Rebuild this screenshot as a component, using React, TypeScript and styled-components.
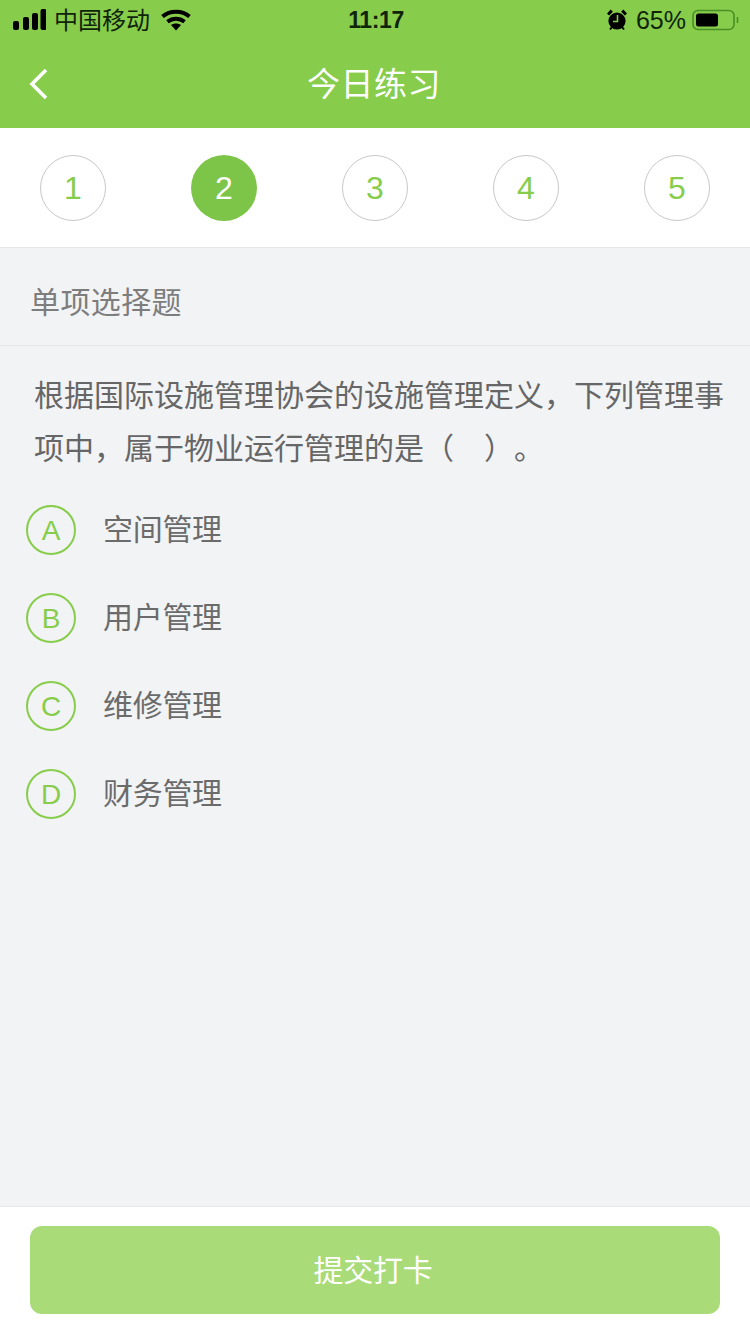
import * as React from "react"
import styled, { createGlobalStyle } from "styled-components"

const GlobalStyle = createGlobalStyle`
  html, body {
    margin: 0;
    padding: 0;
    background: #f2f3f5;
    font-family: "Liberation Sans", "Noto Sans CJK SC", sans-serif;
  }
`

const steps = [1, 2, 3, 4, 5]

const options = [
  { key: "A", label: "空间管理" },
  { key: "B", label: "用户管理" },
  { key: "C", label: "维修管理" },
  { key: "D", label: "财务管理" }
]

const SignalIcon = () => (
  <svg width="33" height="22" viewBox="0 0 33 22">
    <rect x="0" y="12" width="6" height="9" rx="2" fill="#000" />
    <rect x="10" y="8" width="6" height="13" rx="2" fill="#000" />
    <rect x="19" y="4" width="6" height="17" rx="2" fill="#000" />
    <rect x="27.5" y="0" width="6" height="21" rx="2" fill="#000" />
  </svg>
)

const WifiIcon = () => (
  <svg width="30" height="22" viewBox="0 0 30 22">
    <path d="M1.5 7.5C9 1 21 1 28.5 7.5" fill="none" stroke="#000" strokeWidth="4" />
    <path d="M6.5 12.8c5-4 12-4 17 0" fill="none" stroke="#000" strokeWidth="4" />
    <path d="M10 16c3-2 7-2 10 0l-5 5.5z" fill="#000" />
  </svg>
)

const AlarmIcon = () => (
  <svg width="20" height="22" viewBox="0 0 20 22">
    <circle cx="10" cy="12" r="8.6" fill="#000" />
    <path d="M1 5.5 4.8 1.6M19 5.5 15.2 1.6" stroke="#000" strokeWidth="3" />
    <path d="M3 20.5l2-2.5M17 20.5l-2-2.5" stroke="#000" strokeWidth="2" />
    <path d="M10.5 6v6.5H6" fill="none" stroke="#87cd4b" strokeWidth="1.6" />
  </svg>
)

const BatteryIcon = () => (
  <svg width="47" height="22" viewBox="0 0 47 22">
    <rect x="1" y="1.5" width="41" height="19" rx="5" fill="none" stroke="#4a8f26" strokeWidth="1.6" />
    <rect x="4" y="4.5" width="22" height="13" rx="2.5" fill="#000" />
    <path d="M45.5 8v6" stroke="#4a8f26" strokeWidth="1.6" />
  </svg>
)

const BackIcon = () => (
  <svg width="20" height="32" viewBox="0 0 20 32">
    <path d="M17 2 3 16l14 14" fill="none" stroke="#fff" strokeWidth="3.6" />
  </svg>
)

export default function App() {
  return (
    <Page>
      <GlobalStyle />
      <Header>
        <StatusBar>
          <StatusGroup>
            <SignalIcon />
            <Carrier>中国移动</Carrier>
            <WifiIcon />
          </StatusGroup>
          <Clock>11:17</Clock>
          <StatusRight>
            <AlarmIcon />
            <Percent>65%</Percent>
            <BatteryIcon />
          </StatusRight>
        </StatusBar>
        <NavBar>
          <BackButton>
            <BackIcon />
          </BackButton>
          <NavTitle>今日练习</NavTitle>
        </NavBar>
      </Header>

      <Steps>
        {steps.map((step) => (
          <Step key={step} $active={step === 2}>
            {step}
          </Step>
        ))}
      </Steps>

      <SectionTitle>单项选择题</SectionTitle>

      <Content>
        <Question>
          根据国际设施管理协会的设施管理定义，下列管理事项中，属于物业运行管理的是（　）。
        </Question>
        <OptionList>
          {options.map((option) => (
            <Option key={option.key}>
              <OptionBadge>{option.key}</OptionBadge>
              <OptionLabel>{option.label}</OptionLabel>
            </Option>
          ))}
        </OptionList>
      </Content>

      <Footer>
        <SubmitButton>提交打卡</SubmitButton>
      </Footer>
    </Page>
  )
}

const Page = styled.div`
  width: 750px;
  height: 1334px;
  display: flex;
  flex-direction: column;
  background: #f2f3f5;
  overflow: hidden;
`

const Header = styled.header`
  height: 128px;
  background: #87cd4b;
  flex-shrink: 0;
`

const StatusBar = styled.div`
  height: 40px;
  padding: 0 11px 0 13px;
  display: grid;
  grid-template-columns: 1fr auto 1fr;
  align-items: center;
  color: #000;
`

const StatusGroup = styled.div`
  display: flex;
  align-items: center;
  gap: 8px;
`

const StatusRight = styled(StatusGroup)`
  justify-content: flex-end;
  gap: 9px;
`

const Carrier = styled.span`
  font-size: 24px;
  margin: 0 3px 4px 0;
  color: #10240a;
`

const Clock = styled.span`
  font-size: 23px;
  font-weight: 700;
  letter-spacing: -0.4px;
  color: #10240a;
`

const Percent = styled.span`
  font-size: 25px;
  color: #10240a;
  margin-right: -3px;
`

const NavBar = styled.div`
  height: 88px;
  display: flex;
  align-items: center;
  justify-content: center;
  position: relative;
`

const BackButton = styled.div`
  position: absolute;
  left: 29px;
  top: 28px;
  line-height: 0;
`

const NavTitle = styled.h1`
  margin: 0 0 4px -2px;
  font-size: 33px;
  font-weight: 400;
  color: #fff;
  letter-spacing: 0.5px;
`

const Steps = styled.div`
  height: 119px;
  padding: 0 40px;
  display: flex;
  align-items: center;
  justify-content: space-between;
  background: #fff;
  border-bottom: 1px solid #e6e6e6;
  flex-shrink: 0;
`

const Step = styled.div<{ $active?: boolean }>`
  width: 66px;
  height: 66px;
  box-sizing: border-box;
  padding-top: 2px;
  border-radius: 50%;
  display: flex;
  align-items: center;
  justify-content: center;
  font-size: 32px;
  color: ${(p) => (p.$active ? "#fff" : "#87cd4b")};
  background: ${(p) => (p.$active ? "#7cc548" : "#fff")};
  border: ${(p) => (p.$active ? "none" : "1px solid #c8c8c8")};
`

const SectionTitle = styled.div`
  height: 98px;
  box-sizing: border-box;
  padding: 6px 30px 0;
  display: flex;
  align-items: center;
  font-size: 30px;
  letter-spacing: 0.4px;
  color: #7d7d7d;
  border-bottom: 1px solid #e6e7e9;
  flex-shrink: 0;
`

const Content = styled.main`
  flex: 1;
  padding: 23px 26px 0;
`

const Question = styled.p`
  margin: 0 0 0 8px;
  font-size: 30px;
  line-height: 53px;
  color: #666;
  width: 692px;
  text-spacing-trim: space-all;
`

const OptionList = styled.div`
  margin-top: 30px;
  display: flex;
  flex-direction: column;
  gap: 38px;
`

const Option = styled.div`
  display: flex;
  align-items: center;
  gap: 27px;
`

const OptionBadge = styled.div`
  width: 50px;
  height: 50px;
  box-sizing: border-box;
  padding-top: 2px;
  border-radius: 50%;
  border: 2px solid #87cd4b;
  display: flex;
  align-items: center;
  justify-content: center;
  font-size: 28px;
  color: #87cd4b;
`

const OptionLabel = styled.span`
  margin-bottom: 6px;
  font-size: 30px;
  letter-spacing: -0.3px;
  color: #6b6b6b;
`

const Footer = styled.footer`
  height: 128px;
  box-sizing: border-box;
  padding: 19px 30px 0;
  background: #fff;
  border-top: 1px solid #e6e7e9;
  flex-shrink: 0;
`

const SubmitButton = styled.button`
  width: 690px;
  height: 88px;
  padding: 0 4px 4px 0;
  border: none;
  border-radius: 12px;
  background: #a9db78;
  color: #fff;
  font-family: inherit;
  font-size: 30px;
  letter-spacing: -0.3px;
`
